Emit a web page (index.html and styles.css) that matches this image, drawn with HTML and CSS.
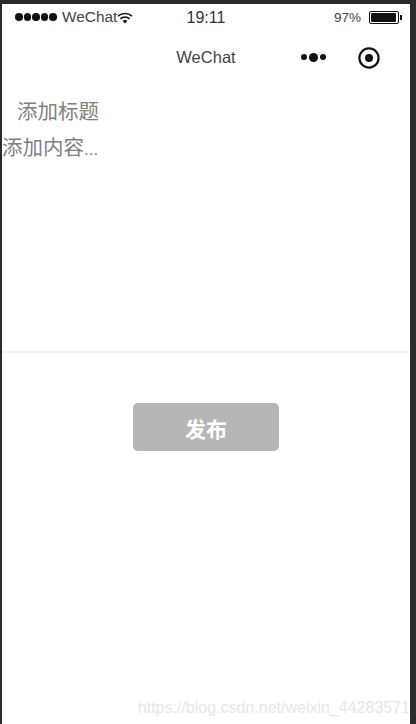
FILE: index.html
```html
<!DOCTYPE html>
<html>
<head>
    <title>WeChat</title>
    <meta http-equiv="Content-Type" content="text/html; charset=utf-8"/>
    <link rel="stylesheet" href="styles.css">
</head>
<body>
    <div class="phone">
        <div class="status-bar">
            <div class="status-left">
                <span class="signal"><i></i><i></i><i></i><i></i><i></i></span>
                <span class="carrier">WeChat</span>
                <svg class="wifi" width="16" height="12" viewBox="0 0 16 12">
                    <path d="M1 4.2C5 .6 11 .6 15 4.2" fill="none" stroke="#111" stroke-width="1.6"/>
                    <path d="M3.4 6.8C6 4.4 10 4.4 12.6 6.8" fill="none" stroke="#111" stroke-width="1.6"/>
                    <path d="M5.6 8.8C7 7.6 9 7.6 10.4 8.8L8 11.4Z" fill="#111"/>
                </svg>
            </div>
            <div class="status-time">19:11</div>
            <div class="status-right">
                <span class="percent">97%</span>
                <span class="battery"><span class="battery-level"></span></span>
                <span class="battery-tip"></span>
            </div>
        </div>
        <div class="nav-bar">
            <div class="nav-title">WeChat</div>
            <div class="capsule">
                <span class="dots"><i></i><i class="big"></i><i></i></span>
                <svg class="record" width="24" height="24" viewBox="0 0 24 24">
                    <circle cx="12" cy="12" r="9.6" fill="none" stroke="#111" stroke-width="2.2"/>
                    <circle cx="12" cy="12" r="4" fill="#111"/>
                </svg>
            </div>
        </div>
        <div class="title-input">添加标题</div>
        <div class="content-input">添加内容<span class="ellipsis">...</span></div>
        <div class="publish-area">
            <button class="publish-btn">发布</button>
        </div>
        <div class="watermark">https://blog.csdn.net/weixin_44283571</div>
    </div>
</body>
</html>
```

FILE: styles.css
```css
html {
    height: 100%;
}

body {
    height: 100%;
    margin: 0;
    padding: 4px 6px 0 2px;
    box-sizing: border-box;
    overflow: hidden;
    background: #2b2b2b;
    font-family: "Liberation Sans", "Noto Sans CJK SC", sans-serif;
    color: #333333;
}

.phone {
    position: relative;
    height: 100%;
    background: #ffffff;
}

.status-bar {
    display: grid;
    grid-template-columns: 1fr auto 1fr;
    align-items: center;
    height: 26px;
    font-size: 15.4px;
}

.status-left {
    display: flex;
    align-items: center;
    padding-left: 13px;
    color: #444444;
}

.signal {
    display: flex;
    gap: 1px;
    margin-right: 5px;
}

.signal i {
    width: 7.6px;
    height: 7.6px;
    border-radius: 50%;
    background: #111111;
}

.wifi {
    margin-top: 1px;
}

.status-time {
    margin-top: 1px;
    color: #333333;
    font-size: 16px;
}

.status-right {
    display: flex;
    align-items: center;
    justify-content: flex-end;
    padding-right: 8px;
}

.percent {
    margin-right: 8px;
    font-size: 13.5px;
    color: #444444;
}

.battery {
    display: block;
    width: 26px;
    height: 9px;
    padding: 1px;
    border: 1px solid #111111;
    border-radius: 2px;
}

.battery-level {
    display: block;
    width: 25px;
    height: 9px;
    background: #111111;
    border-radius: 1px;
}

.battery-tip {
    width: 2px;
    height: 5px;
    margin-left: 1px;
    background: #111111;
}

.nav-bar {
    position: relative;
    display: flex;
    justify-content: center;
    height: 64px;
}

.nav-title {
    margin-top: 18px;
    font-size: 16.5px;
    color: #444444;
}

.capsule {
    position: absolute;
    top: 16px;
    right: 29px;
    display: flex;
    align-items: center;
    gap: 30px;
}

.dots {
    display: flex;
    align-items: center;
    gap: 2px;
    margin: -2px 1px 0 0;
}

.dots i {
    width: 6px;
    height: 6px;
    border-radius: 50%;
    background: #111111;
}

.dots .big {
    width: 9px;
    height: 9px;
}

.title-input {
    height: 36px;
    padding-left: 15px;
    font-size: 20.5px;
    line-height: 35px;
    color: #808080;
}

.content-input {
    height: 221px;
    font-size: 20.5px;
    line-height: 36px;
    color: #808080;
    border-bottom: 2px solid #f0eff4;
}

.ellipsis {
    font-size: 17px;
}

.publish-area {
    display: flex;
    justify-content: center;
    padding-top: 50px;
}

.publish-btn {
    width: 146px;
    height: 48px;
    padding: 2px 0 0;
    border: 0;
    border-radius: 5px;
    background: #b6b6b6;
    font-family: inherit;
    font-size: 21px;
    font-weight: bold;
    color: #ffffff;
}

.watermark {
    position: absolute;
    right: 0;
    bottom: 7px;
    font-size: 16px;
    white-space: nowrap;
    color: #e6e6e6;
}
```
